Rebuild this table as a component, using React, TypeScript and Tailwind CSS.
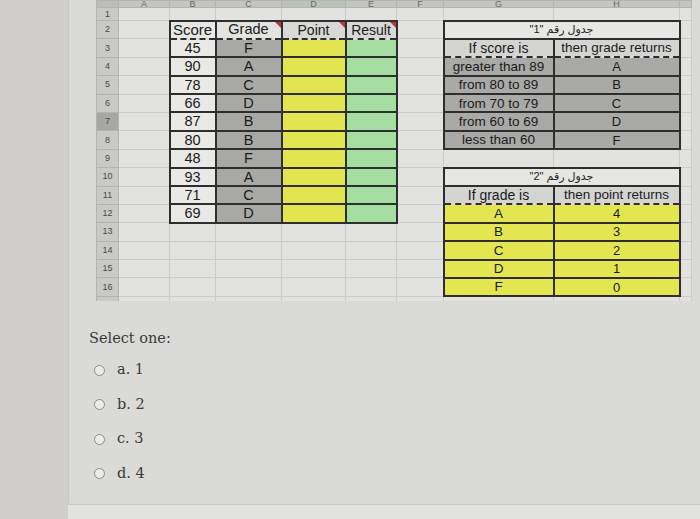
import React from "react";

const SCORES = [45, 90, 78, 66, 87, 80, 48, 93, 71, 69];
const GRADES = ["F", "A", "C", "D", "B", "B", "F", "A", "C", "D"];
const TABLE1 = [
  ["greater than 89", "A"],
  ["from 80 to 89", "B"],
  ["from 70 to 79", "C"],
  ["from 60 to 69", "D"],
  ["less than 60", "F"],
];
const TABLE2 = [
  ["A", "4"],
  ["B", "3"],
  ["C", "2"],
  ["D", "1"],
  ["F", "0"],
];
const LETTERS = ["A", "B", "C", "D", "E", "F", "G", "H", ""];
const OPTIONS = ["a. 1", "b. 2", "c. 3", "d. 4"];

const cell = "p-0 text-center align-middle leading-none whitespace-nowrap overflow-hidden";
const plain = "border border-[#cbcbc9] bg-[#e2e2e0]";
const head = "border-2 border-[#2e2e2e] [border-bottom-style:dashed] relative";
const data = "border-2 border-t-0 border-[#2e2e2e]";
const title = "border-2 border-[#2e2e2e] bg-[#e6e6e4] text-[11px] text-[#222]";

function Flag() {
  return (
    <span className="absolute right-0 top-0 w-0 h-0 border-l-[6px] border-l-transparent border-t-[6px] border-t-[#b8373a]" />
  );
}

function Row({ r }: { r: number }) {
  const tds: React.ReactNode[] = [];
  tds.push(
    <td
      key="h"
      className={`${cell} border border-[#b3b3b1] text-[9px] text-[#4a4a4a] ${
        r === 7 ? "bg-[#a7a7a5]" : "bg-[#c9c9c7]"
      }`}
    >
      {r}
    </td>
  );

  // column A
  tds.push(<td key="a" className={`${cell} ${plain}`} />);

  // score / grade / point / result
  if (r === 2) {
    tds.push(
      <td key="b" className={`${cell} ${head} bg-[#e7e7e5] text-[15px]`}>
        Score
      </td>,
      <td key="c" className={`${cell} ${head} bg-[#e3e3e1] text-[14.5px]`}>
        Grade
        <Flag />
      </td>,
      <td key="d" className={`${cell} ${head} bg-[#d8d8d6] text-[14px]`}>
        Point
        <Flag />
      </td>,
      <td key="e" className={`${cell} ${head} bg-[#d8d8d6] text-[14px]`}>
        Result
        <Flag />
      </td>
    );
  } else if (r >= 3 && r <= 12) {
    const i = r - 3;
    tds.push(
      <td key="b" className={`${cell} ${data} bg-[#e9e9e7] text-[14.5px]`}>
        {SCORES[i]}
      </td>,
      <td key="c" className={`${cell} ${data} bg-[#a8a8a6] text-[14.5px]`}>
        {GRADES[i]}
      </td>,
      <td key="d" className={`${cell} ${data} bg-[#e2e54f]`} />,
      <td key="e" className={`${cell} ${data} bg-[#a6dea1]`} />
    );
  } else {
    tds.push(
      <td key="b" className={`${cell} ${plain}`} />,
      <td key="c" className={`${cell} ${plain}`} />,
      <td key="d" className={`${cell} ${plain}`} />,
      <td key="e" className={`${cell} ${plain}`} />
    );
  }

  // column F
  tds.push(<td key="f" className={`${cell} ${plain}`} />);

  // lookup tables in G and H
  if (r === 2 || r === 10) {
    tds.push(
      <td key="g" colSpan={2} dir="rtl" className={`${cell} ${title}`}>
        {r === 2 ? 'جدول رقم "1"' : 'جدول رقم "2"'}
      </td>
    );
  } else if (r === 3 || r === 11) {
    tds.push(
      <td key="g" className={`${cell} ${head} bg-[#d4d4d2] text-[14px]`}>
        {r === 3 ? "If score is" : "If grade is"}
      </td>,
      <td key="h" className={`${cell} ${head} bg-[#d4d4d2] text-[13.5px]`}>
        {r === 3 ? "then grade returns" : "then point returns"}
      </td>
    );
  } else if (r >= 4 && r <= 8) {
    const row = TABLE1[r - 4];
    tds.push(
      <td key="g" className={`${cell} ${data} bg-[#a9a9a7] text-[13.5px]`}>
        {row[0]}
      </td>,
      <td key="h" className={`${cell} ${data} bg-[#a9a9a7] text-[13px]`}>
        {row[1]}
      </td>
    );
  } else if (r >= 12 && r <= 16) {
    const row = TABLE2[r - 12];
    tds.push(
      <td key="g" className={`${cell} ${data} bg-[#e3e651] text-[13.5px]`}>
        {row[0]}
      </td>,
      <td key="h" className={`${cell} ${data} bg-[#e3e651] text-[13px]`}>
        {row[1]}
      </td>
    );
  } else {
    tds.push(
      <td key="g" className={`${cell} ${plain}`} />,
      <td key="h" className={`${cell} ${plain}`} />
    );
  }

  tds.push(<td key="x" className={`${cell} ${plain}`} />);

  return <tr className={r === 1 ? "h-[13px]" : "h-[18.4px]"}>{tds}</tr>;
}

function Sheet() {
  const rows = Array.from({ length: 17 }, (_, i) => i + 1);
  return (
    <div className="h-[301px] overflow-hidden pl-[27px] pr-[10px] font-['Liberation_Sans','DejaVu_Sans',sans-serif] text-[#1b1b1b]">
      <table className="w-[595px] table-fixed border-collapse">
        <colgroup>
          <col className="w-[22px]" />
          <col className="w-[51px]" />
          <col className="w-[46px]" />
          <col className="w-[66px]" />
          <col className="w-[64px]" />
          <col className="w-[51px]" />
          <col className="w-[47px]" />
          <col className="w-[110px]" />
          <col className="w-[126px]" />
          <col className="w-[12px]" />
        </colgroup>
        <tbody>
          <tr className="h-[7px]">
            <td className="p-0 bg-[#bdbdbb] border border-[#b3b3b1]" />
            {LETTERS.map((l, i) => (
              <td
                key={i}
                className={`p-0 border border-[#b3b3b1] ${i === 3 ? "bg-[#b9c4b7]" : "bg-[#c4c4c2]"}`}
              >
                <div className="h-[6px] overflow-hidden flex items-end justify-center text-[9px] leading-[9px] text-[#6a6a6a]">
                  <span className="translate-y-[2px]">{l}</span>
                </div>
              </td>
            ))}
          </tr>
          {rows.map((r) => (
            <Row key={r} r={r} />
          ))}
        </tbody>
      </table>
    </div>
  );
}

export default function App() {
  return (
    <div className="w-[700px] h-[519px] flex overflow-hidden bg-[#d0cfce]">
      <div className="w-[68px] shrink-0" />
      <div className="flex-1 flex flex-col">
        <div className="h-[505px] shrink-0 bg-[#dadad8] border-l border-b border-[#c6c6c4] rounded-bl-[3px] flex flex-col">
          <Sheet />
          <div className="pl-[20px] pt-[27px] text-[#3b3b3b] font-['DejaVu_Serif','Liberation_Serif',serif]">
            <div className="text-[14.5px] leading-[20px]">Select one:</div>
            <div className="mt-[12px] flex flex-col gap-[14.5px]">
              {OPTIONS.map((o) => (
                <label key={o} className="flex items-center h-[20px] pl-[5px] gap-[12px] text-[14.5px]">
                  <span className="w-[11px] h-[11px] rounded-full border border-[#8c8c8a] bg-[#ebebe9]" />
                  <span>{o}</span>
                </label>
              ))}
            </div>
          </div>
        </div>
        <div className="flex-1 bg-[#e2e2e0]" />
      </div>
    </div>
  );
}
